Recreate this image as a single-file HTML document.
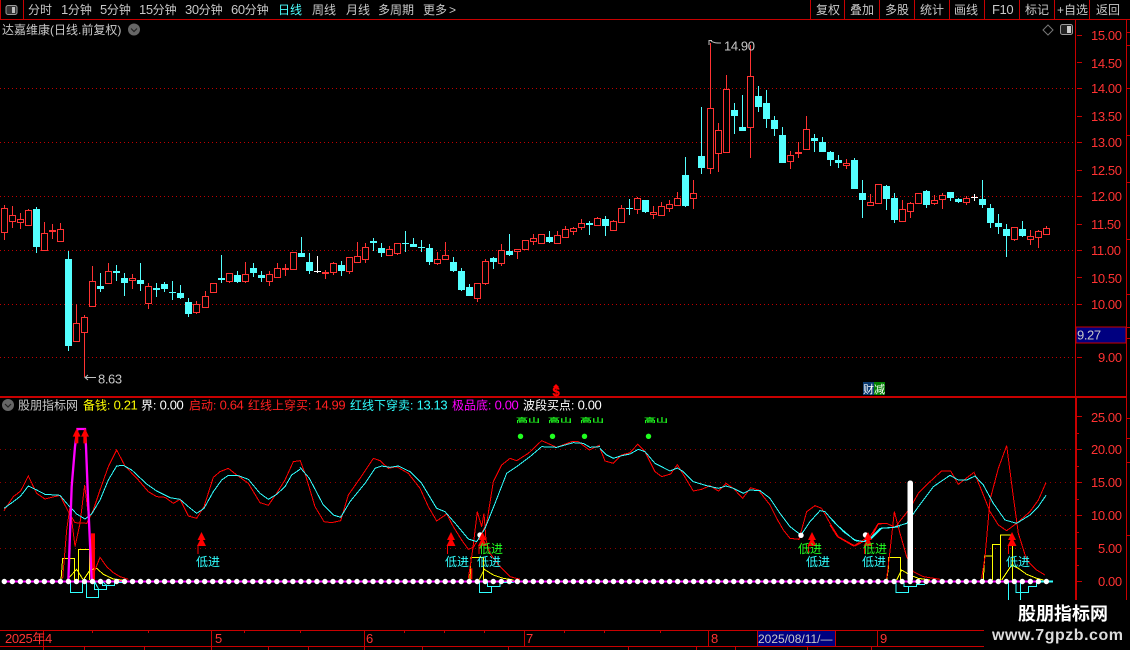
<!DOCTYPE html>
<html><head><meta charset="utf-8"><style>
html,body{margin:0;padding:0;background:#000;overflow:hidden}
svg{display:block;font-family:"Liberation Sans","WenQuanYi Zen Hei","Noto Sans CJK SC",sans-serif;font-size:12px}
.n{fill:#c8c8c8}
.a{fill:#ff3232;font-size:13px;letter-spacing:-.4px}
.d{font-size:13px;letter-spacing:-.4px}
.l{fill:none;stroke-width:3;stroke-linejoin:miter;shape-rendering:crispEdges}
</style></head><body>
<svg id="s" width="1130" height="650" viewBox="0 0 1130 650" xmlns="http://www.w3.org/2000/svg">
<rect width="1130" height="650" fill="#000"/>
<defs>
<g id="ar"><polygon points="0,0 -4,8 4,8" fill="#f00"/><polygon points="0,5 -4.500,14 4.500,14" fill="#f00"/><rect x="-4" y="14" width="1" height="8" fill="#f00"/></g>
</defs>
<!-- grid main -->
<g stroke="#c00000" stroke-dasharray="1 3" shape-rendering="crispEdges">
<line x1="0" x2="1075" y1="88.500" y2="88.500"/><line x1="0" x2="1075" y1="142.500" y2="142.500"/><line x1="0" x2="1075" y1="196.500" y2="196.500"/><line x1="0" x2="1075" y1="250.500" y2="250.500"/><line x1="0" x2="1075" y1="304.500" y2="304.500"/><line x1="0" x2="1075" y1="357.500" y2="357.500"/>
</g>
<!-- grid indicator -->
<g stroke="#900000" stroke-dasharray="1 4" shape-rendering="crispEdges">
<line x1="0" x2="1075" y1="449.500" y2="449.500"/><line x1="0" x2="1075" y1="482.500" y2="482.500"/><line x1="0" x2="1075" y1="515.500" y2="515.500"/><line x1="0" x2="1075" y1="548.500" y2="548.500"/>
</g>
<g id="c" shape-rendering="crispEdges"></g>
<!-- frame -->
<g fill="#c80000" shape-rendering="crispEdges">
<rect x="0" y="19" width="1130" height="1"/>
<rect x="0" y="396" width="1127" height="2"/>
<rect x="1075" y="20" width="1" height="378"/>
<rect x="1075" y="398" width="2" height="232"/>
<rect x="1126" y="20" width="1" height="610"/>
<rect x="23" y="0" width="1" height="19"/><rect x="0" y="0" width="1" height="19"/>
<rect x="810" y="0" width="1" height="19"/><rect x="844" y="0" width="1" height="19"/><rect x="879" y="0" width="1" height="19"/><rect x="914" y="0" width="1" height="19"/><rect x="949" y="0" width="1" height="19"/><rect x="984" y="0" width="1" height="19"/><rect x="1019" y="0" width="1" height="19"/><rect x="1054" y="0" width="1" height="19"/><rect x="1089" y="0" width="1" height="19"/>
<!-- ticks main -->
<rect x="1077" y="35" width="5" height="1"/><rect x="1077" y="62" width="5" height="1"/><rect x="1077" y="88" width="5" height="1"/><rect x="1077" y="116" width="5" height="1"/><rect x="1077" y="142" width="5" height="1"/><rect x="1077" y="170" width="5" height="1"/><rect x="1077" y="196" width="5" height="1"/><rect x="1077" y="224" width="5" height="1"/><rect x="1077" y="250" width="5" height="1"/><rect x="1077" y="277" width="5" height="1"/><rect x="1077" y="304" width="5" height="1"/><rect x="1077" y="357" width="5" height="1"/>
<!-- ticks ind -->
<rect x="1077" y="416" width="5" height="1"/><rect x="1077" y="433" width="2" height="1"/><rect x="1077" y="449" width="5" height="1"/><rect x="1077" y="466" width="2" height="1"/><rect x="1077" y="482" width="5" height="1"/><rect x="1077" y="499" width="2" height="1"/><rect x="1077" y="515" width="5" height="1"/><rect x="1077" y="532" width="2" height="1"/><rect x="1077" y="548" width="5" height="1"/><rect x="1077" y="565" width="2" height="1"/><rect x="1077" y="581" width="5" height="1"/>
<!-- right strip -->
<rect x="1127" y="32" width="3" height="1"/><rect x="1127" y="45" width="3" height="1"/><rect x="1127" y="88" width="3" height="1"/><rect x="1127" y="135" width="3" height="1"/><rect x="1127" y="182" width="3" height="1"/><rect x="1127" y="239" width="3" height="1"/><rect x="1127" y="294" width="3" height="1"/><rect x="1127" y="327" width="3" height="1"/><rect x="1127" y="338" width="3" height="1"/><rect x="1127" y="418" width="3" height="1"/><rect x="1127" y="438" width="3" height="1"/><rect x="1127" y="462" width="3" height="1"/><rect x="1127" y="535" width="3" height="1"/>
<!-- time axis -->
<rect x="0" y="630" width="1130" height="1"/><rect x="0" y="646" width="1130" height="1"/>
<rect x="43" y="630" width="1" height="16"/><rect x="211" y="630" width="1" height="16"/><rect x="364" y="630" width="1" height="16"/><rect x="524" y="630" width="1" height="16"/><rect x="708" y="630" width="1" height="16"/><rect x="877" y="630" width="1" height="16"/>
<rect x="92" y="631" width="1" height="2"/><rect x="148" y="631" width="1" height="2"/><rect x="244" y="631" width="1" height="2"/><rect x="300" y="631" width="1" height="2"/><rect x="404" y="631" width="1" height="2"/><rect x="444" y="631" width="1" height="2"/><rect x="484" y="631" width="1" height="2"/><rect x="564" y="631" width="1" height="2"/><rect x="604" y="631" width="1" height="2"/><rect x="660" y="631" width="1" height="2"/>
<rect x="43" y="647" width="1" height="3"/><rect x="84" y="647" width="1" height="3"/><rect x="144" y="647" width="1" height="3"/><rect x="211" y="647" width="1" height="3"/><rect x="268" y="647" width="1" height="3"/><rect x="308" y="647" width="1" height="3"/><rect x="364" y="647" width="1" height="3"/><rect x="422" y="647" width="1" height="3"/><rect x="508" y="647" width="1" height="3"/><rect x="628" y="647" width="1" height="3"/><rect x="696" y="647" width="1" height="3"/><rect x="735" y="647" width="1" height="3"/><rect x="807" y="647" width="1" height="3"/><rect x="871" y="647" width="1" height="3"/>
</g>
<!-- top left icon -->
<rect x="6" y="5.500" width="11" height="9" rx="2" fill="#333" stroke="#9a9a9a"/><rect x="12" y="7" width="3" height="6" fill="#bbb"/>
<!-- toolbar -->
<g class="n">
<text x="28" y="14">分时</text><text x="61" y="14"><tspan class="d">1</tspan>分钟</text><text x="100" y="14"><tspan class="d">5</tspan>分钟</text><text x="139" y="14"><tspan class="d">15</tspan>分钟</text><text x="185" y="14"><tspan class="d">30</tspan>分钟</text><text x="231" y="14"><tspan class="d">60</tspan>分钟</text>
<text x="278" y="14" style="fill:#4dffff">日线</text><text x="312" y="14">周线</text><text x="346" y="14">月线</text><text x="378" y="14">多周期</text><text x="423" y="14">更多</text><text x="449" y="14">&gt;</text>
<text x="816" y="14">复权</text><text x="850" y="14">叠加</text><text x="885" y="14">多股</text><text x="920" y="14">统计</text><text x="954" y="14">画线</text><text x="992" y="14" class="d">F10</text><text x="1025" y="14">标记</text><text x="1057" y="14">+自选</text><text x="1096" y="14">返回</text>
<text x="2" y="34">达嘉维康(日线.前复权)</text>
</g>
<circle cx="134" cy="29.500" r="6" fill="#666"/><path d="M131 28.500l3 3 3-3" fill="none" stroke="#222" stroke-width="1.200"/>
<path d="M1048 25l5 5-5 5-5-5z" fill="none" stroke="#777"/>
<rect x="1060.500" y="24.500" width="12" height="10" rx="2" fill="#222" stroke="#999"/><rect x="1067" y="26" width="4" height="7" fill="#ccc"/>
<!-- axis labels -->
<g class="a">
<text x="1091" y="40">15.00</text><text x="1091" y="68">14.50</text><text x="1091" y="93">14.00</text><text x="1091" y="121">13.50</text><text x="1091" y="147">13.00</text><text x="1091" y="175">12.50</text><text x="1091" y="201">12.00</text><text x="1091" y="229">11.50</text><text x="1091" y="255">11.00</text><text x="1091" y="283">10.50</text><text x="1091" y="309">10.00</text><text x="1098" y="362">9.00</text>
<text x="1091" y="422">25.00</text><text x="1091" y="454">20.00</text><text x="1091" y="487">15.00</text><text x="1091" y="520">10.00</text><text x="1098" y="553">5.00</text><text x="1098" y="586">0.00</text>
</g>
<rect x="1076" y="327" width="50" height="16" fill="#000080" stroke="#c80000" shape-rendering="crispEdges"/>
<text x="1077" y="339.500" class="n d">9.27</text>
<!-- price marks -->
<path d="M709 40.500h3M709 40v5M711 41c3 2 5 2 10 2" fill="none" stroke="#c0c0c0"/>
<text x="724" y="50.500" class="n d">14.90</text>
<path d="M84.500 377.500H96M88 375l-3 2.500 3 2.500" fill="none" stroke="#c0c0c0"/>
<text x="98" y="383.500" class="n d">8.63</text>
<text x="552.500" y="396" fill="#f00" font-weight="bold" font-size="13" stroke="#f00" stroke-width=".4">$</text><polygon points="556,384 553,387 559,387" fill="#f00"/>
<rect x="863" y="382" width="11" height="13" fill="#0a3a70"/><rect x="874" y="382" width="11" height="13" fill="#008000"/>
<text x="863" y="393" fill="#fff" font-size="11">财</text><text x="874" y="393" fill="#fff" font-size="11">减</text>
<!-- legend -->
<circle cx="8" cy="405" r="6" fill="#666"/><path d="M5 404l3 3 3-3" fill="none" stroke="#222" stroke-width="1.200"/>
<text x="18" y="409.500" class="n">股朋指标网</text>
<text x="83" y="409.500" fill="#ffff00">备钱: <tspan class="d">0.21</tspan></text>
<text x="141" y="409.500" fill="#fff">界: <tspan class="d">0.00</tspan></text>
<text x="189" y="409.500" fill="#ff2020">启动: <tspan class="d">0.64</tspan></text>
<text x="248" y="409.500" fill="#ff2020">红线上穿买: <tspan class="d">14.99</tspan></text>
<text x="350" y="409.500" fill="#30ffff">红线下穿卖: <tspan class="d">13.13</tspan></text>
<text x="452" y="409.500" fill="#ff00ff">极品底: <tspan class="d">0.00</tspan></text>
<text x="523" y="409.500" fill="#fff">波段买点: <tspan class="d">0.00</tspan></text>
<!-- green small -->
<g fill="#20ff20">
<g stroke="#20ff20" stroke-width=".3"><text transform="translate(516,422.500) scale(1,.5)">高山</text><text transform="translate(548,422.500) scale(1,.5)">高山</text><text transform="translate(580,422.500) scale(1,.5)">高山</text><text transform="translate(644,422.500) scale(1,.5)">高山</text></g>
<circle cx="520.500" cy="436.300" r="2.700"/><circle cx="552.500" cy="436.300" r="2.700"/><circle cx="584.500" cy="436.300" r="2.700"/><circle cx="648.500" cy="436.300" r="2.700"/>
</g>
<!-- indicator: baseline -->
<line x1="4" x2="1036" y1="581.500" y2="581.500" stroke="#ff00ff" stroke-width="2"/>
<line x1="1036" x2="1053" y1="581.500" y2="581.500" stroke="#30ffff" stroke-width="2"/>
<!-- zoom 5 -->
<g transform="translate(0,390) scale(.33333)">
<rect x="273" y="430" width="12" height="140" fill="#f00"/>
<polyline class="l" stroke="#ffff00" points="183,570 188,505 223,505 223,570 235,570 235,478 268,478 268,570"/>
<polyline class="l" stroke="#ffff00" points="200,570 230,538 250,570 270,540 290,535 310,553 340,567 380,572"/>
<polyline class="l" stroke="#30ffff" points="211,575 211,607 247,607 247,575 259,575 259,622 296,622 296,598 284,598 284,575 296,598 320,598 320,586 308,586 308,575 320,586 344,586 344,578 380,578"/>
<polyline class="l" stroke="#f00" points="188,565 200,420 210,350 225,470 240,400 254,285 268,400 275,520 285,540 300,502 320,530 340,548 360,560 385,568"/>
<polyline class="l" stroke="#f00" points="12,362 40,320 62,303 85,258 110,310 135,327 180,316 205,365 225,398 260,400 280,360 300,300 325,230 350,180 375,228 415,270 445,305 470,320 495,322 520,340 540,328 565,378 590,385 612,350 640,262 660,245 685,235 710,255 745,280 780,338 805,346 830,310 855,270 880,215 900,212"/>
<polyline class="l" stroke="#30ffff" points="12,355 40,335 62,318 85,288 110,300 135,313 180,316 200,340 230,372 255,387 275,372 300,330 325,270 350,228 370,226 395,240 440,282 470,303 510,323 540,328 565,350 590,370 612,355 640,305 665,270 685,256 715,257 745,268 780,310 805,328 830,313 855,290 875,255 900,238"/>
<polyline fill="none" stroke="#ff00ff" stroke-width="7" points="205,572 215,290 225,170 232,117 255,117 258,170 265,350 275,572"/>
<polygon points="230,115 218,140 242,140" fill="#f00"/><polygon points="255,115 243,140 267,140" fill="#f00"/>
<rect x="225" y="138" width="10" height="22" fill="#f00"/><rect x="250" y="138" width="10" height="22" fill="#f00"/>
</g>
<!-- zoom 6 -->
<g transform="translate(300,390) scale(.33333)">
<polyline class="l" stroke="#ffff00" points="510,570 513,503 550,503 550,570"/>
<polyline class="l" stroke="#ffff00" points="538,568 553,538 580,555 610,565 640,570"/>
<polyline class="l" stroke="#30ffff" points="538,575 538,607 575,607 575,590 562,590 562,575 562,590 600,590 600,578 640,578"/>
<rect x="512" y="535" width="5" height="33" fill="#f00"/>
<polyline class="l" stroke="#f00" points="505,565 518,480 532,365 545,410 552,370 558,450 570,490 600,530 630,560 660,568"/>
<polyline class="l" stroke="#f00" points="0,210 15,250 45,350 72,395 95,398 122,392 145,315 180,265 220,205 240,212 265,235 290,230 325,250 360,295 385,350 410,393 440,372 460,410 485,450 505,478 520,472 545,430 560,400 580,275 605,225 630,205 650,212 685,190 725,152 770,172 815,155 835,155 868,180 900,165"/>
<polyline class="l" stroke="#30ffff" points="0,232 28,265 70,345 100,375 122,382 150,335 195,280 225,235 245,228 270,232 295,228 330,245 365,280 410,355 435,365 470,405 505,447 530,455 555,415 585,340 620,250 650,230 690,200 725,170 770,172 820,158 850,160 870,172 900,170"/>
</g>
<!-- zoom 7 -->
<g transform="translate(600,390) scale(.33333)">
<polyline class="l" stroke="#f00" points="0,175 15,213 40,220 65,195 90,188 113,163 135,185 165,245 185,260 212,252 232,224 280,303 305,298 330,287 355,303 378,280 400,295 428,325 452,293 475,300 510,345 530,385 550,420 570,445 597,448 620,365 645,347 665,355 690,400 715,440 765,468 795,452 815,440 835,402 860,400 885,412"/>
<polyline class="l" stroke="#30ffff" points="0,175 20,195 40,205 65,197 90,192 115,178 135,185 165,220 210,243 232,234 250,245 280,275 320,287 355,295 378,288 400,295 430,310 450,300 480,302 510,325 540,370 570,410 603,435 630,395 660,362 675,365 705,400 765,452 795,455 815,445 845,415 885,412 900,410"/>
</g>
<!-- zoom 8 -->
<g transform="translate(830,390) scale(.33333)">
<polyline class="l" stroke="#ffff00" points="170,570 175,535 175,503 212,503 212,570"/>
<polyline class="l" stroke="#ffff00" points="200,570 215,540 240,555 265,565 300,570"/>
<polyline class="l" stroke="#30ffff" points="198,575 198,607 236,607 236,590 222,590 222,575 222,590 260,590 260,583 285,583"/>
<polyline class="l" stroke="#f00" points="170,565 178,500 193,365 210,430 230,500 250,545 280,560 330,568"/>
<polyline class="l" stroke="#ffff00" points="460,570 464,498 487,498 487,570 487,463 511,463 511,570 511,435 547,435 547,570"/>
<polyline class="l" stroke="#ffff00" points="515,570 545,525 565,535 590,553 620,565 640,570"/>
<polyline class="l" stroke="#30ffff" points="535,575 535,630"/><polyline class="l" stroke="#30ffff" points="572,575 572,630"/>
<polyline class="l" stroke="#30ffff" points="558,575 558,607 596,607 596,590 620,590 620,575"/>
<polyline class="l" stroke="#f00" points="455,565 465,500 480,330 505,235 530,167 550,320 565,430 590,510 620,540 645,555"/>
<polyline class="l" stroke="#f00" points="0,405 22,440 70,468 100,450 120,440 145,400 170,400 195,412 240,355 265,310 300,275 335,243 362,243 385,283 432,247 450,290 480,365 505,405 530,422 560,400 600,365 625,330 648,278"/>
<polyline class="l" stroke="#30ffff" points="0,382 40,425 75,450 100,455 120,445 150,415 190,412 230,400 265,350 310,290 360,256 385,270 410,270 435,258 460,285 490,340 525,390 560,400 600,375 625,350 648,316"/>
</g>
<!-- dots -->
<line x1="4.300" x2="1047" y1="581.500" y2="581.500" stroke="#fff" stroke-width="5.400" stroke-linecap="round" stroke-dasharray="0 8.016"/>
<!-- white bar -->
<rect x="907.500" y="480.500" width="5.500" height="101" rx="2.500" fill="#fff"/>
<circle cx="480" cy="535" r="2.700" fill="#fff"/><circle cx="801" cy="535.300" r="2.700" fill="#fff"/><circle cx="865.500" cy="535" r="2.700" fill="#fff"/>
<!-- arrows -->
<use href="#ar" x="201.500" y="532"/><use href="#ar" x="451" y="532"/><use href="#ar" x="482.500" y="532"/><use href="#ar" x="812" y="532"/><use href="#ar" x="868" y="532"/><use href="#ar" x="1012" y="532"/>
<!-- labels -->
<g fill="#30ffff">
<text x="196" y="566">低进</text><text x="445" y="566">低进</text><text x="477" y="566">低进</text><text x="806" y="566">低进</text><text x="862" y="566">低进</text><text x="1006" y="566">低进</text>
</g>
<g fill="#20ff20">
<text x="479" y="553">低进</text><text x="798" y="553">低进</text><text x="863" y="553">低进</text>
</g>
<!-- time axis text -->
<g class="a">
<text x="5" y="643">2025年</text><text x="45" y="643">4</text><text x="215" y="643">5</text><text x="366" y="643">6</text><text x="526" y="643">7</text><text x="711" y="643">8</text><text x="880" y="643">9</text>
</g>
<rect x="757.500" y="630.500" width="78" height="16" fill="#000080" stroke="#c80000" shape-rendering="crispEdges"/>
<text x="758" y="643" class="n">2025/08/11/—</text>
<!-- watermark -->
<rect x="984" y="600" width="146" height="50" fill="#000"/>
<text x="1018" y="620" fill="#fff" font-size="18" font-weight="bold">股朋指标网</text>
<text x="992" y="640" fill="#ddd" font-size="16" font-weight="bold" textLength="131" lengthAdjust="spacing">www.7gpzb.com</text>
<script>
var A="r 15 25 95 120,r 18 46 62 83,r 40 58 65 87,r 28 31 76 78,c 20 27 140 160,r 67 100 149 150,r 72 90 94 117,r 70 88 122 122,c 153 177 437 452,r 313 370 422 422,r 345 352 395 530,r 198 244 317 317,c 220 258 267 275,r 190 214 248 248,c 195 212 218 243,c 220 235 248 288,r 222 235 239 267,c 189 240 251 272,r 250 259 308 326,c 249 264 270 290,c 246 252 267 275,c 243 276 278 299,c 255 279 294 296,c 294 306 341 350,r 304 313 335 341,r 273 289 320 320,r 250 250 275 275,c 165 235 239 250,r 220 220 242 248,c 213 225 246 249,r 186 223 242 250,c 189 205 219 231,c 213 225 234 246,r 213 223 242 258,r 189 205 231 233,r 192 205 208 228,r 157 157 206 207,c 111 159 171 171,c 159 186 213 221,w 168 214 216 218,r 210 216 220 237,r 187 190 215 225,c 183 195 213 228,r 172 172 212 221,r 126 169 185 185,r 129 142 176 188,c 114 124 128 152,c 130 144 158 170,r 139 148 164 164,r 130 130 158 165,c 94 129 131 155,c 114 132 141 142,c 121 141 143 156,c 133 144 186 194,r 156 178 188 194,r 126 166 176 181,c 172 186 213 215,c 205 213 270 272,c 252 261 288 288,r 250 250 293 306,r 178 184 248 255,c 172 174 186 206,r 132 151 188 197,c 102 153 165 167,r 148 148 152 177,r 121 121 147 147,r 102 114 122 134,r 102 102 128 129,c 94 111 125 128,r 94 106 128 128,r 78 87 110 115";
var B="r 292 295 303 315,r 268 280 290 300,c 273 280 285 315,r 260 265 285 288,c 258 268 288 318,r 270 272 300 302,r 225 235 275 276,c 207 234 236 254,r 200 205 236 252,c 210 210 246 250,r 228 245 251 267,r 216 229 254 255,r 210 223 233 246,r 186 205 225 225,c 81 135 228 230,r 150 190 203 237";
var C="c 321 468 503 522,r 130 325 503 522,r 369 391 458 515,r 225 268 455 458,c 309 330 347 402,c 285 381 392 393,r 135 229 382 473,c 258 288 320 335,c 270 309 356 383,c 349 360 386 407,c 381 405 488 490,r 453 466 482 506,r 426 457 460 473,r 348 388 448 448,c 402 414 423 455,c 411 427 455 456,c 454 457 480 498,c 465 480 488 503,r 477 490 496 506,c 474 480 566 567";
var E="c 150 189 209 263,r 193 217 224 224,r 163 163 218 218,c 165 168 206 239,c 190 205 270 278,r 210 238 272 272,r 217 220 242 263,r 190 190 218 218,c 180 183 225 233,r 195 211 218 224,r 190 194 208 236,c 186 186 203 212,c 204 207 216 220,r 198 203 215 224,w 192 201 203 212,c 150 207 225 233,c 222 234 278 293,c 252 279 290 312,c 282 297 317 380,r 292 292 326 332,c 273 297 318 321,r 300 318 326 345,r 300 304 320 353,r 288 295 311 312";
var g=document.getElementById('c'),NS='http://www.w3.org/2000/svg',idx=0;
function R(x,y,w,h,f,st){var r=document.createElementNS(NS,'rect');r.setAttribute('x',x);r.setAttribute('y',y);r.setAttribute('width',w);r.setAttribute('height',h);r.setAttribute('fill',f);if(st)r.setAttribute('stroke',st);g.appendChild(r);}
function put(s,off){s.split(',').forEach(function(t){var p=t.split(' '),c=p[0];var Y=function(v){return Math.round(off+(+v)/3)};var hi=Y(p[1]),top=Y(p[2]),bot=Y(p[3]),lo=Y(p[4]);var x=Math.round(4.1+8.016*idx);
if(c=='r'){R(x,hi,1,Math.max(lo-hi,1),'#ff3232');R(x-3+.5,top+.5,6,Math.max(bot-top,1),'#000','#ff3232');}
else if(c=='c'){R(x,hi,1,Math.max(lo-hi,1),'#54ffff');R(x-3,top,7,Math.max(bot-top,1),'#54ffff');}
else{R(x,hi,1,Math.max(lo-hi,1),'#fff');R(x-3,top,7,1,'#fff');}
idx++;});}
put(A,200);put(B,130);put(C,0);put(E,130);
</script>
</svg>
</body></html>
